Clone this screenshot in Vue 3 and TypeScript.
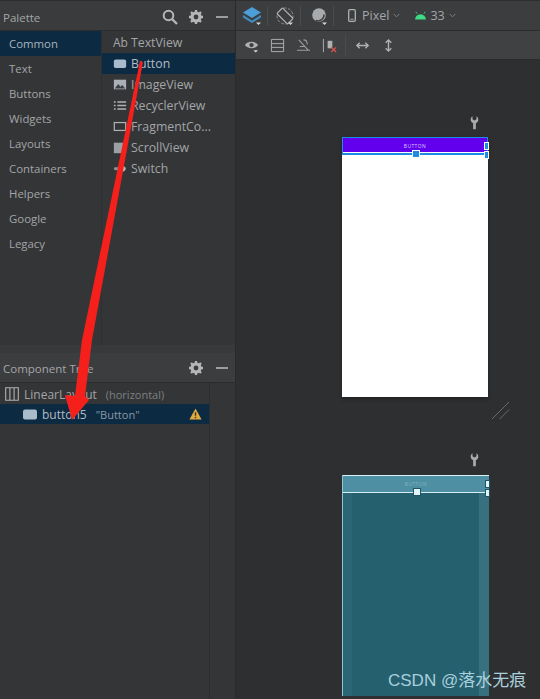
<template>
  <div class="studio">
    <aside class="left">
      <section class="palette">
        <header class="panel-head">
          <span class="panel-title">Palette</span>
          <div class="head-icons">
            <svg class="ico" viewBox="0 0 16 16"><circle cx="6.5" cy="6.5" r="4.8" fill="none" stroke="#b4b6b8" stroke-width="2" /><path d="M10 10l5 5" stroke="#b4b6b8" stroke-width="2.4" /></svg>
            <svg class="ico" viewBox="0 0 16 16"><use href="#gear" /></svg>
            <svg class="ico" viewBox="0 0 16 16"><path d="M2 8h12" stroke="#b4b6b8" stroke-width="1.600" /></svg>
          </div>
        </header>
        <div class="palette-body">
          <ul class="cats">
            <li v-for="c in categories" :key="c" :class="{ on: c === 'Common' }">{{ c }}</li>
          </ul>
          <ul class="widgets">
            <li v-for="w in widgets" :key="w.name" :class="{ on: w.name === 'Button' }">
              <span class="w-ico" :class="w.icon">
                <template v-if="w.icon === 'ab'">Ab</template>
                <svg v-else viewBox="0 0 16 14">
                  <rect v-if="w.icon === 'btn'" x="1" y="2.500" width="14" height="9.500" rx="2" fill="#a9bccb" />
                  <template v-if="w.icon === 'img'">
                    <rect x="1" y="1.500" width="14" height="11" fill="#a9b0b6" />
                    <path d="M2 11.500l4-5 2.500 3 2-2 3.500 4z" fill="#3c3f41" />
                  </template>
                  <template v-if="w.icon === 'list'">
                    <path d="M1 3h2M1 7h2M1 11h2M5 3h10M5 7h10M5 11h10" stroke="#afb1b3" stroke-width="1.500" />
                  </template>
                  <rect v-if="w.icon === 'frag'" x="1.500" y="2.500" width="13" height="9" fill="none" stroke="#afb1b3" stroke-width="1.400" />
                  <rect v-if="w.icon === 'scroll'" x="1" y="1.500" width="14" height="12" fill="#9aa0a5" />
                  <template v-if="w.icon === 'sw'">
                    <rect x="1" y="5.500" width="14" height="3.500" rx="1.700" fill="#8d9296" />
                    <circle cx="10.500" cy="7.200" r="3.400" fill="#b5b8ba" />
                  </template>
                </svg>
              </span>
              <span>{{ w.name }}</span>
            </li>
          </ul>
        </div>
      </section>
      <section class="tree">
        <header class="panel-head tree-head">
          <span class="panel-title">Component Tree</span>
          <div class="head-icons">
            <svg class="ico" viewBox="0 0 16 16"><use href="#gear" /></svg>
            <svg class="ico" viewBox="0 0 16 16"><path d="M2 8h12" stroke="#b4b6b8" stroke-width="1.600" /></svg>
          </div>
        </header>
        <div class="tree-body">
          <div class="tree-rows">
            <div class="row root-row">
              <svg class="row-ico" viewBox="0 0 14 14"><path d="M.7.7h12.600v12.600H.7zM4.900.7v12.600M9.100.7v12.600" fill="none" stroke="#afb1b3" stroke-width="1.100" /></svg>
              <span class="row-name">LinearLayout</span>
              <span class="row-sub">(horizontal)</span>
            </div>
            <div class="row sel-row">
              <svg class="row-ico" viewBox="0 0 14 11"><rect y="0.500" width="14" height="10" rx="2" fill="#a9bccb" /></svg>
              <span class="row-name">button5</span>
              <span class="row-sub">"Button"</span>
              <svg class="warn" viewBox="0 0 14 13"><path d="M7 .5L13.600 12.500H.4z" fill="#e0a93f" /><path d="M7 4.500v4M7 9.500v1.600" stroke="#3a3520" stroke-width="1.500" /></svg>
            </div>
          </div>
          <div class="tree-side"></div>
        </div>
      </section>
    </aside>

    <main class="design">
      <div class="toolbar top-bar">
        <svg class="tb" viewBox="0 0 18 18"><path d="M9 0l9 5.500-9 5.500-9-5.500z" fill="#4a9fd8" /><path d="M0 8l9 5.500L18 8v2.500L9 16l-9-5.500z" fill="#3f8fc5" /><path d="M13 15.500h5l-2.500 2.500z" fill="#d5d7d8" /></svg>
        <i class="sep"></i>
        <svg class="tb" viewBox="0 0 18 18"><circle cx="9" cy="9" r="8" fill="none" stroke="#8d9195" stroke-width="1" stroke-dasharray="3 1.500" /><rect x="5" y="1.500" width="8" height="15" rx="1" fill="#3c3d3f" stroke="#afb1b3" stroke-width="1.200" transform="rotate(-45 9 9)" /><path d="M12 15.500h5l-2.500 2.500z" fill="#d5d7d8" /></svg>
        <i class="sep"></i>
        <svg class="tb globe" viewBox="0 0 18 18"><circle cx="8" cy="8" r="6.800" fill="#a7abae" /><path d="M5 13.500a6 6 0 0 0 8-6" fill="none" stroke="#3c3d3f" stroke-width="1.400" /><path d="M11 15.500h5l-2.500 2.500z" fill="#d5d7d8" /></svg>
        <i class="sep"></i>
        <svg class="phone" viewBox="0 0 8 13"><rect x=".7" y=".7" width="6.600" height="11.600" rx="1.200" fill="none" stroke="#afb1b3" stroke-width="1.300" /><path d="M2.500 10.200h3" stroke="#afb1b3" /></svg>
        <span class="tb-text">Pixel</span>
        <svg class="chev" viewBox="0 0 8 5"><path d="M.7.7L4 4l3.300-3.300" fill="none" stroke="#7f8386" stroke-width="1.100" /></svg>
        <svg class="droid" viewBox="0 0 14 10"><path d="M1 9.500a6 6 0 0 1 12 0z" fill="#3ddc84" /><path d="M3.200 3L1.800.8M10.800 3L12.200.8" stroke="#3ddc84" stroke-width=".9" /></svg>
        <span class="tb-text">33</span>
        <svg class="chev" viewBox="0 0 8 5"><path d="M.7.7L4 4l3.300-3.300" fill="none" stroke="#7f8386" stroke-width="1.100" /></svg>
      </div>
      <div class="toolbar sub-bar">
        <svg class="tb2" viewBox="0 0 16 16"><path d="M1 7.500C4 3 12 3 15 7.500 12 12 4 12 1 7.500z" fill="#afb1b3" /><circle cx="8" cy="7.500" r="2.300" fill="#3c3f41" /><path d="M10 13h5l-2.500 2.500z" fill="#d5d7d8" /></svg>
        <svg class="tb2" viewBox="0 0 16 16"><path d="M1.500 1.500h13v13h-13zM1.500 6h13M1.500 10h13" fill="none" stroke="#afb1b3" stroke-width="1" /></svg>
        <svg class="tb2" viewBox="0 0 16 16"><path d="M3 2l10 11M8 2c3 0 4 2 4 5M4 9h6M1 13h14" fill="none" stroke="#9a9ea1" stroke-width="1.100" /></svg>
        <svg class="tb2" viewBox="0 0 16 16"><path d="M1.500 1v14" stroke="#afb1b3" /><rect x="6" y="3" width="5" height="8" fill="#afb1b3" /><path d="M10 10l5 5M15 10l-5 5" stroke="#d9534f" stroke-width="1.400" /></svg>
        <i class="sep short"></i>
        <svg class="tb2" viewBox="0 0 16 16"><path d="M2 8h12M5 5L2 8l3 3M11 5l3 3-3 3" fill="none" stroke="#afb1b3" stroke-width="1.500" /></svg>
        <svg class="tb2" viewBox="0 0 16 16"><path d="M8 2v12M5 5l3-3 3 3M5 11l3 3 3-3" fill="none" stroke="#afb1b3" stroke-width="1.500" /></svg>
      </div>
      <div class="canvas">
        <svg class="wrench w1" viewBox="0 0 10 15"><path d="M2.800.6A4.200 4.200 0 0 0 3.500 8.200V15h3V8.200A4.200 4.200 0 0 0 7.200.6V4L5 5.200 2.800 4z" fill="#a9abad" /></svg>
        <div class="device light">
          <div class="dev-button"><span>BUTTON</span></div>
          <i class="handle bottom"></i><i class="handle right-a"></i><i class="handle right-b"></i>
        </div>
        <svg class="resize" viewBox="0 0 20 20"><path d="M1 19L19 1M9 19L19 9" stroke="#8b8d8f" stroke-width=".7" /></svg>
        <svg class="wrench w2" viewBox="0 0 10 15"><path d="M2.800.6A4.200 4.200 0 0 0 3.500 8.200V15h3V8.200A4.200 4.200 0 0 0 7.200.6V4L5 5.200 2.800 4z" fill="#a9abad" /></svg>
        <div class="device blue">
          <div class="dev-button"><span>BUTTON</span></div>
          <i class="handle bottom"></i><i class="handle right-a"></i><i class="handle right-b"></i>
        </div>
        <span class="mark">CSDN @落水无痕</span>
      </div>
    </main>

    <svg class="arrow" viewBox="0 0 540 699">
      <path d="M140 61L143 62L92 340L85 396L89 400L72 420L65 395L75 396L82 340z" fill="#f5201b" />
    </svg>

    <svg width="0" height="0" class="defs">
      <defs>
        <g id="gear">
          <circle cx="8" cy="8" r="4" fill="none" stroke="#b4b6b8" stroke-width="3.200" />
          <path d="M8 1v3M8 12v3M1 8h3M12 8h3M3 3l2 2M11 11l2 2M13 3l-2 2M5 11l-2 2" stroke="#b4b6b8" stroke-width="2.400" />
        </g>
      </defs>
    </svg>
  </div>
</template>

<script setup lang="ts">
const categories = ['Common', 'Text', 'Buttons', 'Widgets', 'Layouts', 'Containers', 'Helpers', 'Google', 'Legacy']

const widgets = [
  { name: 'TextView', icon: 'ab' },
  { name: 'Button', icon: 'btn' },
  { name: 'ImageView', icon: 'img' },
  { name: 'RecyclerView', icon: 'list' },
  { name: 'FragmentCo...', icon: 'frag' },
  { name: 'ScrollView', icon: 'scroll' },
  { name: 'Switch', icon: 'sw' }
]
</script>

<style>
html,
body {
  margin: 0;
  background: #2e2f31;
}
</style>

<style scoped>
.studio {
  position: relative;
  display: flex;
  width: 540px;
  height: 699px;
  overflow: hidden;
  background: #2e2f31;
  color: #a3a5a7;
  font-family: "Open Sans", "Noto Sans", sans-serif;
  font-size: 12px;
}

ul {
  margin: 0;
  padding: 0;
  list-style: none;
}

.left {
  display: flex;
  flex-direction: column;
  width: 235px;
  flex-shrink: 0;
  border-right: 1px solid #2a2a2b;
  box-sizing: content-box;
}

.palette {
  height: 345px;
  display: flex;
  flex-direction: column;
  background: #343537;
}

.panel-head {
  display: flex;
  align-items: center;
  justify-content: space-between;
  height: 31px;
  flex-shrink: 0;
  padding: 3px 5px 0 3px;
  background: #3a3b3d;
  border-top: 1px solid #2e2e2f;
  border-bottom: 1px solid #2c2c2d;
  box-sizing: border-box;
}

.panel-title {
  font-size: 11.500px;
  color: #a4a6a8;
}

.head-icons {
  display: flex;
  gap: 10px;
  align-items: center;
}

.ico {
  width: 16px;
  height: 16px;
}

.palette-body {
  display: flex;
  flex: 1;
}

.cats {
  width: 101px;
  background: #343537;
  border-right: 1px solid #2e2f30;
  font-size: 11.400px;
}

.cats li {
  height: 25px;
  line-height: 25px;
  padding-left: 9px;
}

.cats li.on {
  background: #0c2a42;
  color: #a9b4bd;
}

.widgets {
  flex: 1;
  padding-top: 1px;
  font-size: 12.300px;
}

.widgets li {
  display: flex;
  align-items: center;
  height: 21px;
  padding-left: 11px;
  gap: 4px;
}

.widgets li.on {
  background: #0c2a42;
  color: #b2bcc4;
}

.w-ico {
  display: flex;
  align-items: center;
  width: 14px;
  font-size: 12px;
}

.w-ico svg {
  width: 15px;
  height: 13px;
}

.tree {
  flex: 1;
  display: flex;
  flex-direction: column;
  background: #343537;
  border-top: 8px solid #38393b;
}

.tree-head {
  height: 30px;
  padding-top: 1px;
  border-top: none;
  background: #3c3d3f;
}

.tree-body {
  flex: 1;
  display: flex;
}

.tree-rows {
  width: 209px;
  padding-top: 1px;
}

.tree-side {
  flex: 1;
  border-left: 1px solid #2c2d2e;
}

.row {
  display: flex;
  align-items: center;
  height: 20px;
  gap: 5px;
}

.root-row {
  padding-left: 5px;
}

.sel-row {
  background: #0c2a42;
  padding-left: 23px;
  padding-right: 7px;
  color: #b2bcc4;
}

.row-ico {
  width: 14px;
  height: 14px;
}

.sel-row .row-ico {
  height: 11px;
}

.row-name {
  white-space: nowrap;
}

.row-sub {
  margin-left: 4px;
  font-size: 11px;
  color: #7d8083;
}

.sel-row .row-sub {
  color: #8b99a5;
}

.warn {
  margin-left: auto;
  width: 13px;
  height: 12px;
}

.design {
  flex: 1;
  display: flex;
  flex-direction: column;
}

.toolbar {
  display: flex;
  align-items: center;
  flex-shrink: 0;
  box-sizing: border-box;
}

.top-bar {
  height: 31px;
  padding-left: 7px;
  background: #3c3d3f;
  border-top: 1px solid #2e2e2f;
  border-bottom: 1px solid #2c2c2d;
}

.sub-bar {
  height: 29px;
  padding-left: 8px;
  gap: 11px;
  background: #404143;
  border-bottom: 1px solid #2c2c2d;
}

.sep {
  width: 1px;
  height: 20px;
  margin: 0 8px 0 6px;
  background: #4b4c4e;
}

.sep.short {
  margin: 0 -2px 0 -3px;
}

.tb {
  width: 18px;
  height: 18px;
}

.globe {
  margin-left: 2px;
  margin-right: -2px;
}

.tb2 {
  width: 15px;
  height: 15px;
}

.phone {
  width: 8px;
  height: 13px;
  margin-left: 6px;
  margin-right: 6px;
}

.tb-text {
  font-size: 12.500px;
  color: #a4a6a8;
}

.chev {
  width: 7px;
  height: 5px;
  margin-left: 4px;
  margin-right: 14px;
}

.droid {
  width: 13px;
  height: 9px;
  margin-right: 3px;
}

.canvas {
  position: relative;
  flex: 1;
  background: #2e2f31;
}

.wrench {
  position: absolute;
  width: 9px;
  height: 15px;
}

.w1 {
  left: 234px;
  top: 55px;
}

.w2 {
  left: 234px;
  top: 392px;
}

.device {
  position: absolute;
  left: 106px;
  box-shadow: 0 2px 4px rgba(0, 0, 0, 0.3);
}

.device.light {
  top: 77px;
  width: 146px;
  height: 260px;
  background: #fff;
}

.device.blue {
  top: 415px;
  width: 147px;
  height: 221px;
  background: #25606f;
  border-left: 1px solid #8fc4d2;
  box-sizing: border-box;
  box-shadow: inset -10px 0 0 #37717f, inset 9px 0 0 #2c6676;
}

.dev-button {
  display: flex;
  align-items: center;
  justify-content: center;
  font-size: 5px;
  letter-spacing: 0.4px;
}

.light .dev-button {
  height: 15px;
  background: #6200ee;
  color: #dcc6ff;
  border: 1px solid #1c8be6;
  border-bottom-width: 2px;
  box-shadow: inset 0 -1px 0 #fff;
}

.blue .dev-button {
  height: 16px;
  background: #4f8fa3;
  color: #7fb2c1;
  border-top: 1px solid #d8f0f5;
  border-bottom: 1px solid #d8f0f5;
}

.handle {
  position: absolute;
  width: 8px;
  height: 8px;
  box-sizing: border-box;
}

.light .handle {
  background: #1c8be6;
  border: 1px solid #fff;
}

.blue .handle {
  background: #e0f6fb;
  border: 1px solid #215565;
}

.handle.bottom {
  left: 70px;
  top: 13px;
}

.handle.right-a {
  right: -1px;
  top: 5px;
  width: 5px;
}

.handle.right-b {
  right: -1px;
  top: 14px;
  width: 5px;
}

.resize {
  position: absolute;
  left: 255px;
  top: 341px;
  width: 19px;
  height: 19px;
}

.mark {
  position: absolute;
  top: 606px;
  left: 152px;
  font-family: "Liberation Sans", "Noto Sans CJK SC", sans-serif;
  font-size: 17px;
  white-space: nowrap;
  color: #a9cfdc;
}

.arrow {
  position: absolute;
  inset: 0;
  width: 540px;
  height: 699px;
  pointer-events: none;
}

.defs {
  position: absolute;
}
</style>
